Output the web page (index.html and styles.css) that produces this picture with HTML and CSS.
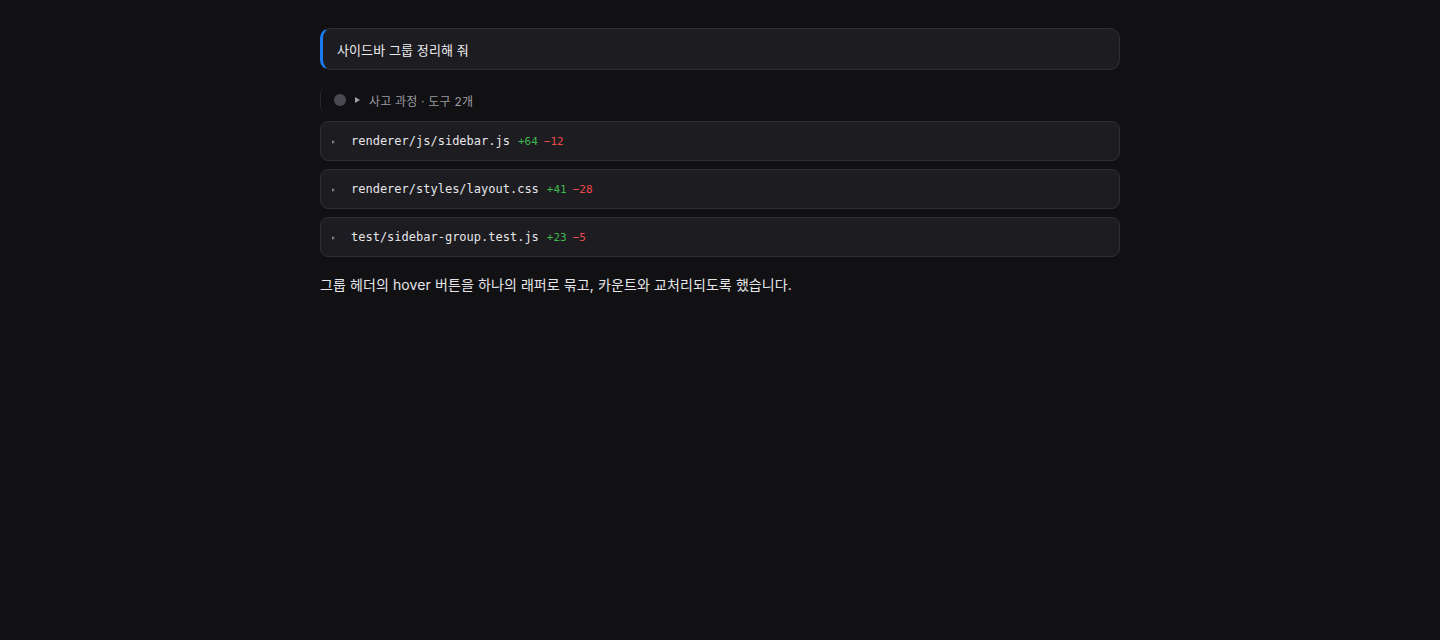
FILE: index.html
```html
<!DOCTYPE html>
<html lang="ko">
<head>
<meta charset="utf-8">
<link rel="stylesheet" href="styles.css">
</head>
<body>
<main class="thread">
  <div class="user-msg">사이드바 그룹 정리해 줘</div>
  <div class="thinking">
    <span class="dot"></span>
    <span class="tri"></span>
    <span class="thinking-label">사고 과정 · 도구 2개</span>
  </div>
  <div class="files">
    <div class="file">
      <span class="caret"></span>
      <span class="path">renderer/js/sidebar.js</span>
      <span class="add">+64</span>
      <span class="del">−12</span>
    </div>
    <div class="file">
      <span class="caret"></span>
      <span class="path">renderer/styles/layout.css</span>
      <span class="add">+41</span>
      <span class="del">−28</span>
    </div>
    <div class="file">
      <span class="caret"></span>
      <span class="path">test/sidebar-group.test.js</span>
      <span class="add">+23</span>
      <span class="del">−5</span>
    </div>
  </div>
  <p class="answer">그룹 헤더의 hover 버튼을 하나의 래퍼로 묶고, 카운트와 교처리되도록 했습니다.</p>
</main>
</body>
</html>
```

FILE: styles.css
```css
html, body {
  margin: 0;
  padding: 0;
  background: #111113;
  height: 100%;
}
body {
  font-family: Inter, "Noto Sans CJK KR", sans-serif;
  color: #e6e6ea;
}
.thread {
  width: 800px;
  margin: 0 auto;
  padding-top: 28px;
  display: flex;
  flex-direction: column;
}
.user-msg {
  height: 42px;
  box-sizing: border-box;
  display: flex;
  align-items: center;
  padding-left: 14px;
  background: #1c1c21;
  border: 1px solid #2e2e35;
  border-left: 3px solid #1a7cf0;
  border-radius: 10px;
  font-size: 13px;
  letter-spacing: 0.1px;
  color: #ececf0;
}
.thinking {
  margin-top: 18px;
  height: 24px;
  display: flex;
  align-items: center;
  border-left: 1px solid #26262b;
  border-radius: 6px;
  padding-left: 13px;
  font-size: 12px;
  color: #9a9aa2;
}
.dot {
  width: 12px;
  height: 12px;
  border-radius: 50%;
  background: #4a4a50;
}
.tri {
  width: 0;
  height: 0;
  margin-left: 9px;
  border-top: 3px solid transparent;
  border-bottom: 3px solid transparent;
  border-left: 5px solid #a0a0a8;
}
.thinking-label {
  margin-left: 9px;
  letter-spacing: 0.2px;
}
.files {
  margin-top: 9px;
  display: flex;
  flex-direction: column;
  gap: 8px;
}
.file {
  height: 40px;
  box-sizing: border-box;
  display: flex;
  align-items: center;
  padding-left: 11px;
  background: #1c1c21;
  border: 1px solid #2e2e35;
  border-radius: 8px;
  font-family: "DejaVu Sans Mono", monospace;
  font-size: 12px;
}
.caret {
  width: 0;
  height: 0;
  margin-top: 2px;
  border-top: 2px solid transparent;
  border-bottom: 2px solid transparent;
  border-left: 3px solid #7a7a82;
  margin-right: 16px;
}
.path {
  color: #e6e6ea;
}
.add {
  color: #3fb950;
  font-size: 11px;
  margin-left: 8px;
}
.del {
  color: #f04a4a;
  font-size: 11px;
  margin-left: 6px;
}
.answer {
  margin: 18px 0 0;
  font-size: 14px;
  line-height: 20px;
  letter-spacing: 0.1px;
  color: #e6e6ea;
}
```
